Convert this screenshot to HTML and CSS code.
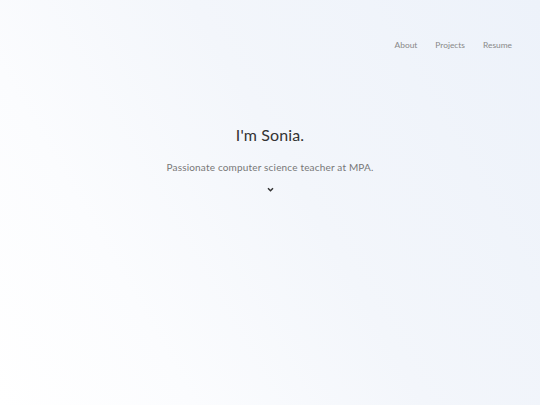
FILE: index.html
```html
<!DOCTYPE html>
<html>
<head>
<meta charset="utf-8">
<link rel="stylesheet" href="styles.css">
</head>
<body>
<div class="page">
  <nav class="nav">
    <a class="nav-link" href="#">About</a>
    <a class="nav-link" href="#">Projects</a>
    <a class="nav-link" href="#">Resume</a>
  </nav>
  <main class="hero">
    <h1 class="title">I'm Sonia.</h1>
    <p class="subtitle">Passionate computer science teacher at MPA.</p>
    <svg class="chevron" width="7" height="5" viewBox="0 0 7 5"><path d="M1 1.2 L3.5 3.7 L6 1.2" fill="none" stroke="#333" stroke-width="1.5"/></svg>
  </main>
</div>
</body>
</html>
```
FILE: styles.css
```css
html, body {
  margin: 0;
  padding: 0;
  height: 100%;
}
body {
  font-family: Lato, "Open Sans", sans-serif;
  background: linear-gradient(240deg, #edf2fa 0%, #f3f6fb 45%, #fbfcfe 75%, #ffffff 100%);
}
.page {
  height: 405px;
  display: flex;
  flex-direction: column;
}
.nav {
  display: flex;
  justify-content: flex-end;
  gap: 18px;
  padding: 40px 28px 0 0;
}
.nav-link {
  font-size: 8.4px;
  color: #888;
  text-decoration: none;
  letter-spacing: 0;
}
.hero {
  display: flex;
  flex-direction: column;
  align-items: center;
  padding-top: 75px;
}
.title {
  margin: 0;
  font-size: 16px;
  font-weight: 400;
  color: #333;
  letter-spacing: 0.12px;
}
.subtitle {
  margin: 17px 0 0;
  font-size: 10px;
  color: #777;
  letter-spacing: 0.18px;
}
.chevron {
  margin-top: 14px;
}
```
